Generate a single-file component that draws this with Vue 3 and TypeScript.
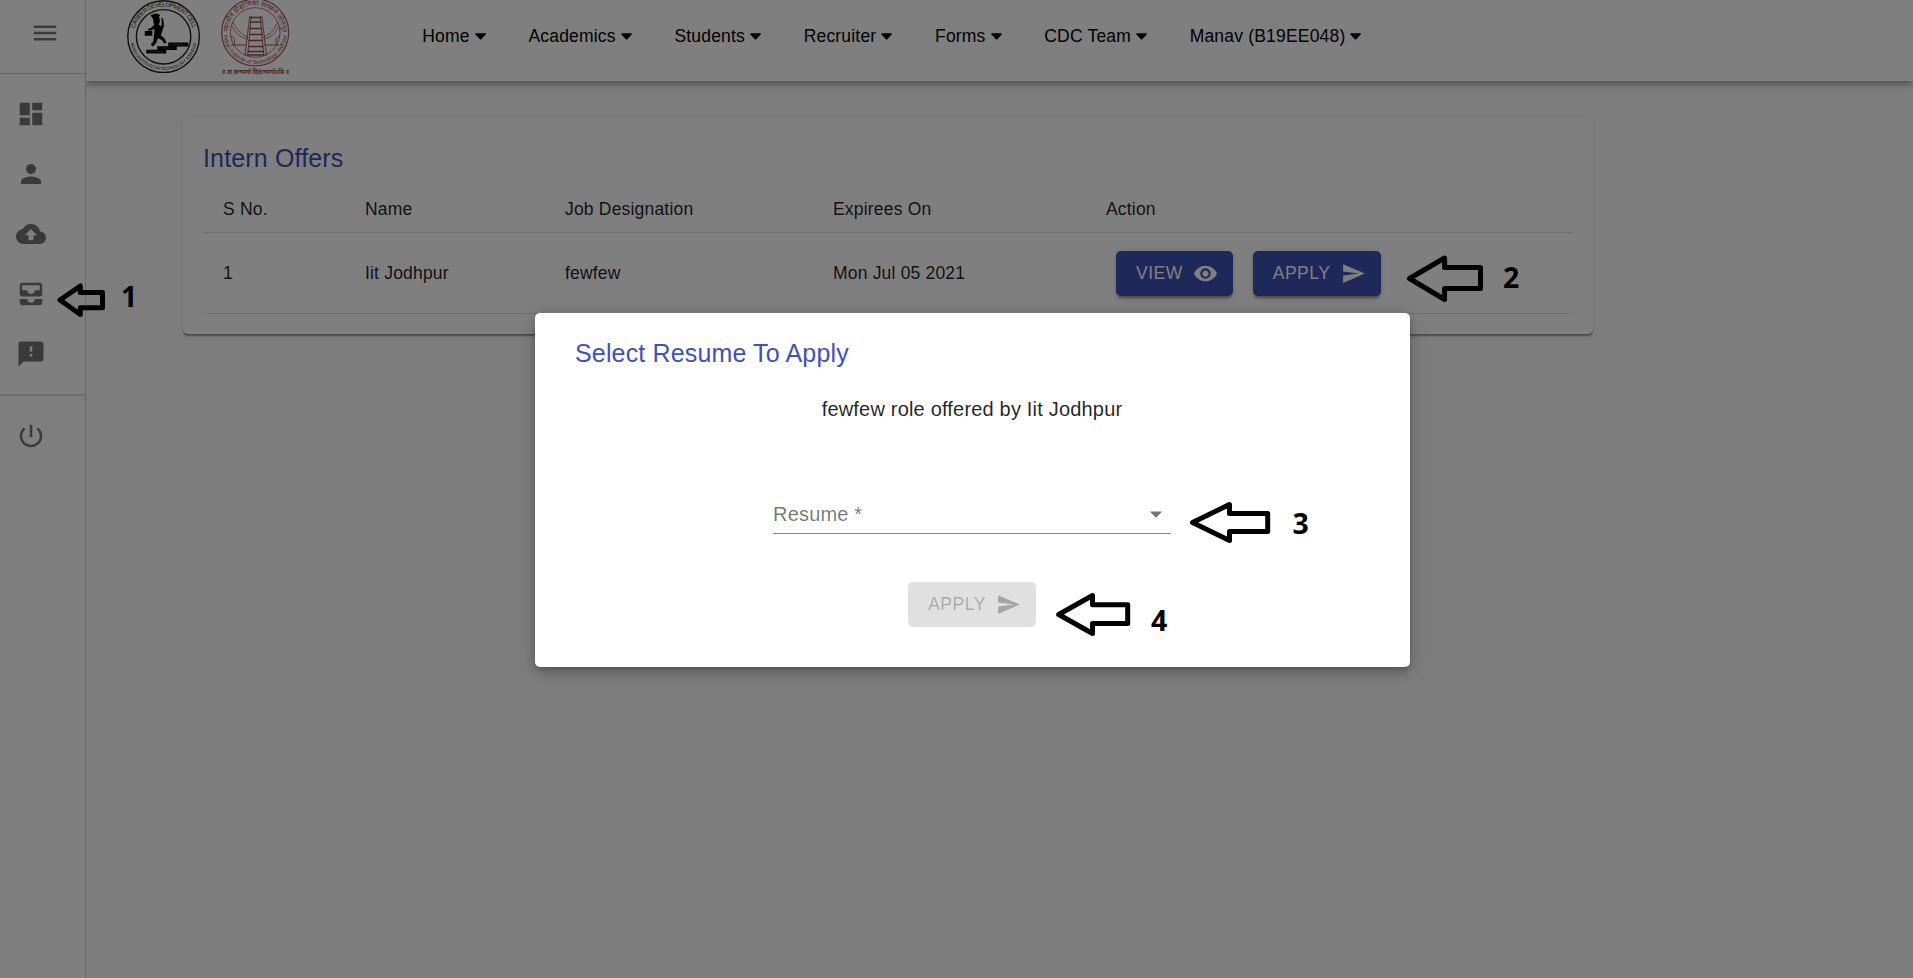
<script setup lang="ts">
interface Offer {
  id: number
  name: string
  designation: string
  expires: string
}

interface Marker {
  label: string
  points: string
  x: number
  y: number
}

const navItems: string[] = ['Home', 'Academics', 'Students', 'Recruiter', 'Forms', 'CDC Team', 'Manav (B19EE048)']

const icons = {
  menu: 'M3 18h18v-2H3v2zm0-5h18v-2H3v2zm0-7v2h18V6H3z',
  dashboard: 'M3 13h8V3H3v10zm0 8h8v-6H3v6zm10 0h8V11h-8v10zm0-18v6h8V3h-8z',
  person: 'M12 12c2.21 0 4-1.79 4-4s-1.79-4-4-4-4 1.79-4 4 1.79 4 4 4zm0 2c-2.67 0-8 1.34-8 4v2h16v-2c0-2.66-5.33-4-8-4z',
  upload: 'M19.35 10.04C18.67 6.59 15.64 4 12 4 9.11 4 6.6 5.64 5.35 8.04 2.34 8.36 0 10.91 0 14c0 3.31 2.69 6 6 6h13c2.76 0 5-2.24 5-5 0-2.64-2.05-4.78-4.65-4.96zM14 13v4h-4v-4H7l5-5 5 5h-3z',
  inbox: 'M19 3H5c-1.1 0-2 .9-2 2v7c0 1.1.9 2 2 2h14c1.1 0 2-.9 2-2V5c0-1.1-.9-2-2-2zm0 6h-4c0 1.62-1.38 3-3 3s-3-1.38-3-3H5V5h14v4zm-4 7h6v3c0 1.1-.9 2-2 2H5c-1.1 0-2-.9-2-2v-3h6c0 1.66 1.34 3 3 3s3-1.34 3-3z',
  feedback: 'M20 2H4c-1.1 0-1.99.9-1.99 2L2 22l4-4h14c1.1 0 2-.9 2-2V4c0-1.1-.9-2-2-2zm-7 12h-2v-2h2v2zm0-4h-2V6h2v4z',
  power: 'M13 3h-2v10h2V3zm4.83 2.17l-1.42 1.42C17.99 7.86 19 9.81 19 12c0 3.87-3.13 7-7 7s-7-3.13-7-7c0-2.19 1.01-4.14 2.58-5.42L6.17 5.17C4.23 6.82 3 9.26 3 12c0 4.97 4.03 9 9 9s9-4.03 9-9c0-2.74-1.23-5.18-3.17-6.83z',
  eye: 'M12 4.5C7 4.5 2.73 7.61 1 12c1.73 4.39 6 7.5 11 7.5s9.27-3.11 11-7.5c-1.73-4.39-6-7.5-11-7.5zM12 17c-2.76 0-5-2.24-5-5s2.24-5 5-5 5 2.24 5 5-2.24 5-5 5zm0-8c-1.66 0-3 1.34-3 3s1.34 3 3 3 3-1.34 3-3-1.34-3-3-3z',
  send: 'M2.01 21L23 12 2.01 3 2 10l15 2-15 2z',
  dropdown: 'M7 10l5 5 5-5z',
}

const sideIcons: string[] = [icons.dashboard, icons.person, icons.upload, icons.inbox, icons.feedback]

const offers: Offer[] = [{ id: 1, name: 'Iit Jodhpur', designation: 'fewfew', expires: 'Mon Jul 05 2021' }]

const markers: Marker[] = [
  { label: '1', points: '60,300 80.3,286 80.3,292.5 102.5,292.5 102.5,307.8 80.3,307.8 80.3,314.5', x: 121, y: 307 },
  { label: '2', points: '1409.5,278.5 1444.6,258 1444.6,267.5 1480.5,267.5 1480.5,288.5 1444.6,288.5 1444.6,299.5', x: 1503, y: 288 },
  { label: '3', points: '1192.5,522.5 1229.5,504.5 1229.5,513.5 1267.7,513.5 1267.7,531.5 1229.5,531.5 1229.5,540.5', x: 1292.5, y: 534 },
  { label: '4', points: '1058.7,614.5 1092.5,595.5 1092.5,604.8 1127.7,604.8 1127.7,623.5 1092.5,623.5 1092.5,633.5', x: 1151, y: 631 },
]
</script>

<template>
  <div class="page">
    <aside class="drawer">
      <div class="drawer-top">
        <svg class="icon" viewBox="0 0 24 24"><path :d="icons.menu" /></svg>
      </div>
      <nav class="drawer-list">
        <a v-for="(d, i) in sideIcons" :key="i" class="drawer-item">
          <svg class="icon" viewBox="0 0 24 24"><path :d="d" /></svg>
        </a>
      </nav>
      <div class="drawer-foot">
        <a class="drawer-item">
          <svg class="icon" viewBox="0 0 24 24"><path :d="icons.power" /></svg>
        </a>
      </div>
    </aside>

    <div class="content">
      <header class="topbar">
        <svg class="logos" viewBox="120 0 180 81" width="180" height="81">
          <defs>
            <path id="cdcTop" d="M133.5 36.5a30.1 30.1 0 0 1 60.2 0" />
            <path id="cdcBottom" d="M130 36.5a33.6 33.6 0 0 0 67.2 0" />
            <path id="iitTop" d="M228.2 32.5a27 27 0 0 1 54 0" />
            <path id="iitBottom" d="M223.7 32.5a31.5 31.5 0 0 0 63 0" />
          </defs>
          <g fill="none" stroke="#222">
            <circle cx="163.6" cy="36.6" r="35.8" stroke-width="1.4" />
            <circle cx="163.6" cy="36.8" r="27.2" stroke-width="1.4" />
          </g>
          <g fill="#222">
            <text class="cdc-text"><textPath href="#cdcTop" startOffset="50%" text-anchor="middle" textLength="78">CAREER DEVELOPMENT CELL</textPath></text>
            <text class="cdc-text cdc-lower"><textPath href="#cdcBottom" startOffset="50%" text-anchor="middle" textLength="92">INDIAN INSTITUTE OF TECHNOLOGY JODHPUR</textPath></text>
          </g>
          <g fill="#000">
            <path d="M150.5 15.3l5.5-2 4.2 1.6-1 1.3.4 3.5c.8 1.7 0 3.7-1.3 4.5 1.5.8 2.4 1.5 2.7 2.5 1-2 .9-5 .3-8.5l1.3-.2c1 3 1.6 6 1.2 8.5l-1.7 5-1.3 4 3.2 2.3 2.5 5-2.2.7-2.5-3.5-4-1.7-1.5 4.5-3.5 3.7-2-2 2.5-3 1-8 .2-4.5-3.5 1.5h-3v-1.5l3-1 3.3-3.5c-1-1.5-1.2-3-.8-4.7z" />
            <path d="M144.8 31h7.5v4.7h-7.5zM168.3 42.6h20v4h-20zM157.3 46.2h19.5v3.8h-19.5zM146.3 49.8h20v3.8h-20z" />
          </g>
          <path d="M172 44.6h13M161 48.1h11M150 51.7h12" stroke="#777" stroke-width=".7" stroke-dasharray="1.5 .7" />

          <g fill="none" stroke="#a34a4a">
            <circle cx="255.2" cy="32.5" r="33.5" stroke-width="1.1" />
            <circle cx="255.2" cy="32.5" r="24.8" stroke-width=".8" />
            <path d="M249.7 16L245 55.5M251.3 16l-3.6 39.5M260.2 16l3.6 39.5M261.8 16l4.7 39.5" stroke-width=".9" />
            <path d="M250 17.5h11.5M250 22h11.5M249.5 28.5h12.5M249 34.5h13.5M248.5 40.5h14.5M248 46.5h15.5M247.5 51.5h16.5M247 55h17.5" stroke-width="1.3" />
            <path d="M231.5 25c3 8 9 13 16.5 14M279 25c-3 8-8 13-15.5 14M233 22c4 9 9 13 15 15M277.5 22c-4 9-8 13-14 15" stroke-width=".7" />
            <path d="M231 45h16M264.5 45h15" stroke-width="1" />
            <path d="M231 36.5c4 1 4 5 3 8M279.500 36.5c-4 1-4 5-3 8" stroke-width=".9" />
          </g>
          <g fill="#a04646">
            <text class="iit-hindi"><textPath href="#iitTop" startOffset="50%" text-anchor="middle" textLength="84">भारतीय प्रौद्योगिकी संस्थान जोधपुर</textPath></text>
            <text class="iit-text"><textPath href="#iitBottom" startOffset="50%" text-anchor="middle" textLength="94">Indian Institute of Technology Jodhpur</textPath></text>
            <text class="iit-motto" x="255.5" y="73.8" text-anchor="middle" textLength="67" lengthAdjust="spacingAndGlyphs">॥ त्वं ज्ञानमयो विज्ञानमयोऽसि ॥</text>
          </g>
        </svg>
        <nav class="nav">
          <a v-for="item in navItems" :key="item" class="nav-item">
            <span>{{ item }}</span>
            <svg class="caret" viewBox="0 0 11 7"><path d="M1 .2h9.2c.7 0 1 .8.5 1.3L6.3 6.3c-.4.4-1 .4-1.4 0L.4 1.5C-.1 1 .2.2 1 .2z" /></svg>
          </a>
        </nav>
      </header>

      <main class="card">
        <h6 class="title">Intern Offers</h6>
        <table class="offers">
          <colgroup>
            <col class="c-no" />
            <col class="c-name" />
            <col class="c-job" />
            <col class="c-exp" />
            <col />
          </colgroup>
          <thead>
            <tr>
              <th>S No.</th>
              <th>Name</th>
              <th>Job Designation</th>
              <th>Expirees On</th>
              <th>Action</th>
            </tr>
          </thead>
          <tbody>
            <tr v-for="offer in offers" :key="offer.id">
              <td>{{ offer.id }}</td>
              <td>{{ offer.name }}</td>
              <td>{{ offer.designation }}</td>
              <td>{{ offer.expires }}</td>
              <td>
                <div class="actions">
                  <button class="btn primary" type="button">
                    View<svg class="end-icon" viewBox="0 0 24 24"><path :d="icons.eye" /></svg>
                  </button>
                  <button class="btn primary" type="button">
                    Apply<svg class="end-icon send" viewBox="0 0 24 24"><path :d="icons.send" /></svg>
                  </button>
                </div>
              </td>
            </tr>
          </tbody>
        </table>
      </main>
    </div>

    <div class="backdrop">
      <section class="dialog" role="dialog">
        <h6 class="title">Select Resume To Apply</h6>
        <p class="subtitle">fewfew role offered by Iit Jodhpur</p>
        <div class="select">
          <span>Resume *</span>
          <svg class="icon" viewBox="0 0 24 24"><path :d="icons.dropdown" /></svg>
        </div>
        <button class="btn disabled" type="button" disabled>
          Apply<svg class="end-icon" viewBox="0 0 24 24"><path :d="icons.send" /></svg>
        </button>
      </section>
    </div>

    <svg class="markers" viewBox="0 0 1913 978" width="1913" height="978">
      <g v-for="m in markers" :key="m.label">
        <polygon :points="m.points" fill="none" stroke="#000" stroke-width="5" stroke-linejoin="round" />
        <text :x="m.x" :y="m.y">{{ m.label }}</text>
      </g>
    </svg>
  </div>
</template>

<style>
body {
  margin: 0;
  background: #fafafa;
}
</style>

<style scoped>
.page {
  position: relative;
  display: flex;
  width: 1913px;
  height: 978px;
  overflow: hidden;
  background: #fafafa;
  color: rgba(0, 0, 0, 0.87);
  font-family: 'Liberation Sans', Arial, sans-serif;
  font-size: 17.5px;
  letter-spacing: 0.01071em;
}

.icon {
  display: block;
  width: 30px;
  height: 30px;
  fill: rgba(0, 0, 0, 0.54);
}

.drawer {
  position: relative;
  z-index: 2;
  box-sizing: border-box;
  width: 86px;
  height: 100%;
  flex: none;
  background: #fff;
  border-right: 1px solid rgba(0, 0, 0, 0.2);
}

.drawer-top {
  box-sizing: border-box;
  height: 74px;
  padding: 18px 0 0 30px;
  border-bottom: 1px solid rgba(0, 0, 0, 0.2);
}

.drawer-list {
  padding: 10px 0;
}

.drawer-item {
  display: flex;
  align-items: center;
  height: 60px;
  padding-left: 16px;
}

.drawer-foot {
  border-top: 2px solid rgba(0, 0, 0, 0.14);
  padding-top: 10px;
}

.content {
  flex: 1;
}

.topbar {
  position: relative;
  z-index: 1;
  display: flex;
  height: 81px;
  background: #fff;
  box-shadow: 0 2.5px 5px -1px rgba(0, 0, 0, 0.2), 0 5px 6px rgba(0, 0, 0, 0.14), 0 1px 12px rgba(0, 0, 0, 0.12);
}

.logos {
  flex: none;
  margin-left: 34px;
  overflow: visible;
}

.cdc-text {
  font-size: 6px;
  letter-spacing: 0;
}

.cdc-lower {
  font-size: 4.3px;
}

.iit-hindi {
  font: 7px 'Noto Sans Devanagari', 'Noto Sans', sans-serif;
  letter-spacing: 0;
}

.iit-text {
  font-size: 5.5px;
  letter-spacing: 0;
}

.iit-motto {
  font: bold 7px 'Noto Sans Devanagari', 'Noto Sans', sans-serif;
  letter-spacing: 0;
}

.nav {
  display: flex;
  gap: 42.7px;
  height: 72px;
  margin-left: 122.3px;
  align-items: center;
  color: #000;
}

.nav-item {
  display: flex;
  align-items: center;
  gap: 5px;
  white-space: nowrap;
}

.caret {
  width: 11px;
  height: 7px;
}

.card {
  box-sizing: border-box;
  width: 1410px;
  height: 216px;
  margin: 37px 0 0 97px;
  padding: 20px;
  background: #fff;
  border-radius: 5px;
  box-shadow: 0 2.5px 1.25px -1.25px rgba(0, 0, 0, 0.2), 0 1.25px 1.25px rgba(0, 0, 0, 0.14), 0 1.25px 4px rgba(0, 0, 0, 0.12);
}

.title {
  margin: 0;
  color: #3f51b5;
  font-size: 25px;
  font-weight: 400;
  line-height: 40px;
  letter-spacing: 0.006em;
}

.offers {
  width: 1370px;
  table-layout: fixed;
  border-collapse: separate;
  border-spacing: 0;
}

.c-no {
  width: 142px;
}

.c-name {
  width: 200px;
}

.c-job {
  width: 268px;
}

.c-exp {
  width: 273px;
}

.offers th,
.offers td {
  box-sizing: border-box;
  padding: 0 20px;
  border-bottom: 1px solid #e0e0e0;
  font-weight: 400;
  text-align: left;
}

.offers th {
  height: 55px;
  padding-top: 16px;
  padding-bottom: 8px;
}

.offers td {
  height: 81px;
}

.actions {
  display: flex;
  gap: 20px;
  padding-left: 10px;
}

.btn {
  display: flex;
  align-items: center;
  box-sizing: border-box;
  height: 45px;
  padding: 0 20px;
  border: 0;
  border-radius: 5px;
  font-family: inherit;
  font-size: 17.5px;
  letter-spacing: 0.02857em;
  text-transform: uppercase;
}

.end-icon {
  width: 25px;
  height: 25px;
  margin: 0 -5px 0 10px;
  fill: currentColor;
}

.send {
  margin-left: 11px;
}

.primary {
  background: #3f51b5;
  color: #fff;
  box-shadow: 0 4px 1.25px -2.5px rgba(0, 0, 0, 0.2), 0 2.5px 2.5px rgba(0, 0, 0, 0.14), 0 1.25px 6px rgba(0, 0, 0, 0.12);
}

.disabled {
  background: rgba(0, 0, 0, 0.12);
  color: rgba(0, 0, 0, 0.26);
}

.backdrop {
  position: absolute;
  z-index: 3;
  inset: 0;
  display: flex;
  align-items: center;
  justify-content: center;
  padding: 2px 0 0 32px;
  background: rgba(0, 0, 0, 0.5);
}

.dialog {
  display: flex;
  flex-direction: column;
  align-items: center;
  box-sizing: border-box;
  width: 875px;
  height: 354px;
  padding: 20px 40px;
  background: #fff;
  border-radius: 5px;
  box-shadow: 0 4px 6px -2px rgba(0, 0, 0, 0.2), 0 6px 12px rgba(0, 0, 0, 0.14), 0 1px 18px rgba(0, 0, 0, 0.12);
}

.dialog .title {
  align-self: flex-start;
}

.subtitle {
  margin: 21px 1px 0 0;
  font-size: 20px;
  line-height: 30px;
  letter-spacing: 0.00938em;
}

.select {
  display: flex;
  align-items: center;
  justify-content: space-between;
  box-sizing: border-box;
  width: 398px;
  height: 40px;
  margin: 70px 1px 0 0;
  padding-top: 1px;
  border-bottom: 1px solid rgba(0, 0, 0, 0.48);
  color: rgba(0, 0, 0, 0.54);
  font-size: 20px;
  letter-spacing: 0.00938em;
}

.dialog .btn {
  margin: 48px 1px 0 0;
}

.markers {
  position: absolute;
  z-index: 4;
  inset: 0;
}

.markers text {
  font-family: 'Open Sans', 'Noto Sans', sans-serif;
  font-size: 28.5px;
  font-weight: 700;
  letter-spacing: 0;
}
</style>
